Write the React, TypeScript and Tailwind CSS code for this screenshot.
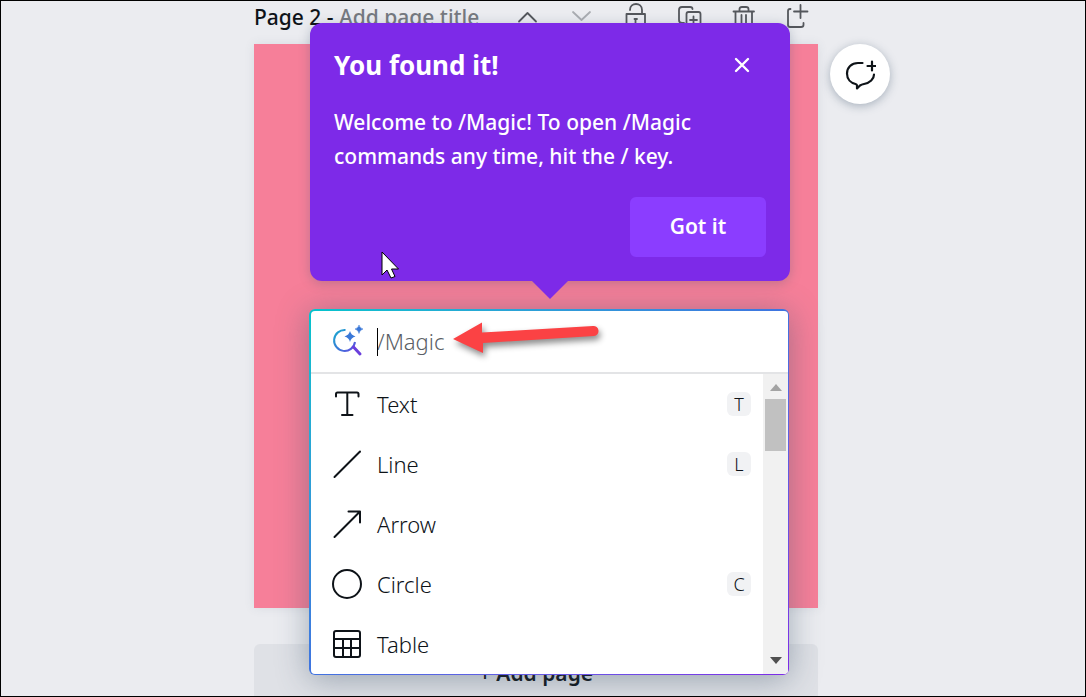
import { useState } from "react";

interface Command {
	name: string;
	shortcut?: string;
	icon: React.ReactNode;
}

const commands: Command[] = [
	{
		name: "Text",
		shortcut: "T",
		icon: <path d="M5 8.500V6Q5 4.500 6.500 4.500H26Q27.500 4.500 27.500 6V8.500M16.300 4.500V27M11 27H21.500" />,
	},
	{ name: "Line", shortcut: "L", icon: <path d="M3.500 29L29 3.500" /> },
	{ name: "Arrow", icon: <path d="M3.500 29L29 3.500M17.500 3.500H29V14.500" /> },
	{ name: "Circle", shortcut: "C", icon: <circle cx="16" cy="16" r="14" /> },
	{
		name: "Table",
		icon: (
			<>
				<rect x="3" y="3" width="26" height="26" rx="2" />
				<path d="M3 11H29M3 20H29M12 11V29M20 11V29" />
			</>
		),
	},
];

const pageActions = [
	{ label: "Move up", icon: <path d="M7 20.500L15.500 12L24 20.500" /> },
	{ label: "Move down", icon: <path d="M7 11L15.500 19L24 11" />, faded: true },
	{
		label: "Lock page",
		icon: <path d="M6.500 28V13H25V28ZM10 9C10 1 22 1 22 9V13M15.500 18V23M14.500 18H17" />,
	},
	{
		label: "Duplicate page",
		icon: (
			<>
				<path d="M10 22H8Q5 22 5 19V9Q5 6 8 6H16Q18.500 6 18.500 8" />
				<rect x="12.500" y="11" width="14" height="15" rx="2" />
				<path d="M19.500 15.500V22.500M16 19H23" />
			</>
		),
	},
	{
		label: "Delete page",
		icon: <path d="M5.500 10.500H26M7.500 10.500V27H24V10.500M11.500 10V8Q11.500 6 14 6H18Q20.500 6 20.500 8V10M13.500 14V24M18 14V24" />,
	},
	{
		label: "New page",
		icon: <path d="M8.500 8H8Q6 8 6 10V24Q6 26 8 26H19Q21.500 26 21.500 24V22M18.500 4V17M12 10.500H25.500" />,
	},
];

function MagicIcon() {
	return (
		<svg viewBox="0 0 32 32" className="size-8 shrink-0 overflow-visible" fill="none" aria-hidden="true">
			<defs>
				<linearGradient id="magic" x1="0" y1="2" x2="28" y2="32" gradientUnits="userSpaceOnUse">
					<stop stopColor="#13b5cd" />
					<stop offset="0.5" stopColor="#3a78d8" />
					<stop offset="1" stopColor="#7d2ae8" />
				</linearGradient>
			</defs>
			<path d="M14.500 4A10.500 10.500 0 1 0 24 16" stroke="url(#magic)" strokeWidth="2" />
			<path d="M22.500 21L29 28" stroke="#6b3fdc" strokeWidth="3" strokeLinecap="round" />
			<path d="M19 5Q20 9 24.500 10.500Q20 11.500 19 16Q18 11.500 13.500 10.500Q18 9 19 5Z" fill="#3a78d8" />
			<path d="M28 -1Q28.500 2 32 3Q28.500 4 28 7.500Q27.500 4 24 3Q27.500 2 28 -1Z" fill="#3a78d8" stroke="#3a78d8" strokeWidth="0.500" />
		</svg>
	);
}

function Popover({ onClose }: { onClose: () => void }) {
	return (
		<section className="relative -mr-px ml-px rounded-xl bg-[#7d2ae8] p-6 text-white shadow-[0_2px_12px_rgba(64,87,109,0.3)]">
			<header className="flex items-center justify-between pr-4">
				<h2 className="text-[26px] leading-9 font-bold">You found it!</h2>
				<button type="button" aria-label="Close" onClick={onClose}>
					<svg viewBox="0 0 16 16" className="size-4" fill="none" stroke="currentColor" strokeWidth="2.400" strokeLinecap="round">
						<path d="M2 2L14 14M14 2L2 14" />
					</svg>
				</button>
			</header>
			<p className="mt-[22px] text-[21px] leading-[34px] font-medium">
				Welcome to /Magic! To open /Magic
				<br />
				commands any time, hit the / key.
			</p>
			<div className="mt-6 flex justify-end">
				<button type="button" onClick={onClose} className="h-[60px] w-[136px] rounded-md bg-[#8b3dff] text-[21px] font-semibold">
					Got it
				</button>
			</div>
			<svg viewBox="0 0 36 18" className="absolute top-full left-1/2 h-[18px] w-9 -translate-x-1/2" aria-hidden="true">
				<path d="M0 0H36L18 18Z" fill="#7d2ae8" />
			</svg>
			<svg viewBox="0 0 18 28" className="absolute bottom-0.5 left-[71px] h-7 w-[18px]" aria-hidden="true">
				<path d="M1 1V24L6 19L10 27L14 25.500L10.500 18H17.500Z" fill="white" stroke="black" strokeWidth="1" />
			</svg>
		</section>
	);
}

function CommandMenu() {
	return (
		<section className="rounded-md bg-linear-to-br from-[#00c4cc] via-[#3f73e0] to-[#7d2ae8] pt-0.5 pr-px pb-px pl-0.5 shadow-[0_4px_32px_rgba(64,87,109,0.45)]">
			<div className="overflow-hidden rounded bg-white">
				<div className="relative flex h-[63px] items-center gap-3.5 border-b-2 border-[#e3e4e6] pl-5">
					<MagicIcon />
					<div className="relative flex-1">
						<input
							type="text"
							aria-label="Magic command"
							placeholder="/Magic"
							className="block h-7 w-full text-[22px] font-light outline-none placeholder:text-[#5b5f66]"
						/>
						<span className="absolute top-0 left-0 h-7 w-px bg-black" />
					</div>
					<svg viewBox="0 0 150 40" className="absolute top-2 left-[140px] h-10 w-[150px] drop-shadow-[2px_4px_3px_rgba(0,0,0,0.45)]" aria-hidden="true">
						<path d="M2 20L31 3.500V13.500L142 7A5 5 0 0 1 143 17L32 24V34Z" fill="#fb4244" />
					</svg>
				</div>
				<div className="flex">
					<ul className="flex-1">
						{commands.map((command) => (
							<li key={command.name}>
								<button type="button" className="flex h-[60px] w-full items-center gap-3.5 pr-3 pl-5 text-left text-[#0e1318]">
									<svg viewBox="0 0 32 32" className="size-8 shrink-0" fill="none" stroke="currentColor" strokeWidth="2" strokeLinecap="round" strokeLinejoin="round" aria-hidden="true">
										{command.icon}
									</svg>
									<span className="flex-1 text-[22px] font-light">{command.name}</span>
									{command.shortcut && (
										<kbd className="flex size-6 items-center justify-center rounded-md bg-[#f1f2f4] font-['Noto_Sans',sans-serif] text-lg font-light">
											{command.shortcut}
										</kbd>
									)}
								</button>
							</li>
						))}
					</ul>
					<div className="flex w-[25px] flex-col items-center justify-between bg-[#f1f1f1] pt-2.5 pb-2.5" aria-hidden="true">
						<div className="flex w-full flex-col items-center gap-2">
							<svg viewBox="0 0 12 7" className="h-[7px] w-3">
								<path d="M0 7L6 0L12 7Z" fill="#a3a3a3" />
							</svg>
							<div className="h-[52px] w-[21px] bg-[#c1c1c1]" />
						</div>
						<svg viewBox="0 0 12 7" className="h-[7px] w-3">
							<path d="M0 0L6 7L12 0Z" fill="#505050" />
						</svg>
					</div>
				</div>
			</div>
		</section>
	);
}

function App() {
	const [showTip, setShowTip] = useState<boolean>(true);

	return (
		<main className="h-screen overflow-hidden border border-black bg-[#ebecf0] pr-3.5 font-['Noto_Sans',sans-serif] text-[#0e1318]">
			<div className="relative mx-auto w-full max-w-[564px]">
				<header className="flex h-[43px] items-start justify-between pr-1">
					<h1 className="text-[21px] leading-8 font-medium whitespace-nowrap">
						Page 2 - <span className="text-[#75797f]">Add page title</span>
					</h1>
					<div className="flex gap-[22px]">
						{pageActions.map((action) => (
							<button key={action.label} type="button" aria-label={action.label} className={action.faded ? "text-[#a9acb1]" : "text-[#54575c]"}>
								<svg viewBox="0 0 32 32" className="size-8" fill="none" stroke="currentColor" strokeWidth="1.800" strokeLinecap="round" strokeLinejoin="round">
									{action.icon}
								</svg>
							</button>
						))}
					</div>
				</header>
				<div className="h-[564px] bg-[#f67f99] shadow-[0_0_10px_rgba(64,87,109,0.1)]" />
				<button type="button" className="mt-9 h-[60px] w-full rounded-md bg-[#dfe1e6] text-[21px] font-semibold">
					+ Add page
				</button>

				<button
					type="button"
					aria-label="Add comment"
					className="absolute top-[43px] left-full ml-3 flex size-[60px] items-center justify-center rounded-full bg-white shadow-[0_2px_10px_rgba(64,87,109,0.4)]"
				>
					<svg viewBox="0 0 32 32" className="size-8" fill="none" stroke="currentColor" strokeWidth="2.200" strokeLinecap="round" strokeLinejoin="round">
						<path d="M18.500 5H14C7.500 5 3 9.500 3 15.500C3 21.500 7 25 11.500 26Q13 26.500 13 27.500V30.500L16 27.500Q17.500 26.500 20 26C26 25 30 21 30 16.500M28 3.500V12.500M23.500 8H32" />
					</svg>
				</button>

				<div className="absolute top-[22px] left-[55px] flex w-[480px] flex-col gap-7">
					{showTip && <Popover onClose={() => setShowTip(false)} />}
					<CommandMenu />
				</div>
			</div>
		</main>
	);
}

export default App;
